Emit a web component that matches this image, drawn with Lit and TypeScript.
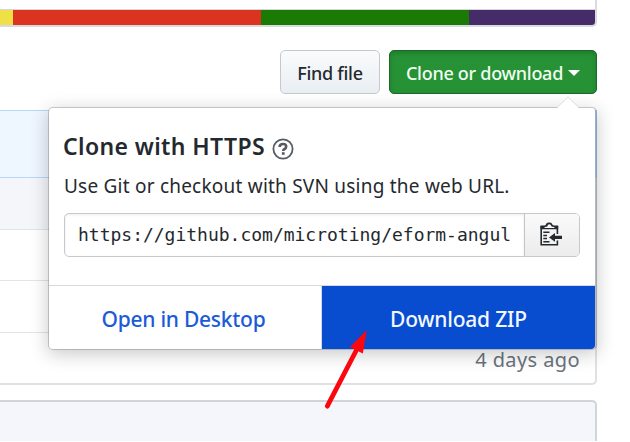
import { LitElement, html, css } from "lit";
import { customElement } from "lit/decorators.js";

const languages = [
  { color: "#f0e048", width: 12.5 },
  { color: "#da3420", width: 248.5 },
  { color: "#1b7a03", width: 208 },
  { color: "#452c68", width: 126 },
];

@customElement("clone-popover")
export class ClonePopover extends LitElement {
  static styles = css`
    :host {
      display: block;
      box-sizing: border-box;
      width: 549px;
      height: 243px;
      border: 1px solid rgba(27, 31, 35, 0.2);
      border-right-width: 2px;
      border-radius: 5px;
      background: #fff;
      background-clip: padding-box;
      box-shadow: 0 4px 18px rgba(27, 31, 35, 0.24);
      color: #24292e;
    }
    .caret {
      position: absolute;
      top: -12px;
      right: 15px;
      width: 24px;
      height: 13px;
      display: block;
    }
    .body {
      box-sizing: border-box;
      height: 177px;
      padding: 21px 15px 0;
    }
    .title {
      display: flex;
      align-items: center;
      height: 34px;
      gap: 7px;
      margin-left: -1px;
      font-size: 23px;
      font-weight: 600;
      white-space: nowrap;
    }
    .title span {
      width: 202px;
      letter-spacing: 0.38px;
    }
    .help {
      width: 22px;
      height: 22px;
      margin-top: 6px;
    }
    .desc {
      height: 28px;
      line-height: 28px;
      margin-top: 9px;
      font-size: 19px;
      letter-spacing: 0.22px;
      white-space: nowrap;
    }
    .group {
      display: flex;
      height: 44px;
      margin-top: 13px;
      box-sizing: border-box;
      border: 1.5px solid #c5c9cf;
      border-radius: 5px;
      overflow: hidden;
    }
    .url {
      flex: 1;
      padding-left: 13px;
      font: 18px/41px "DejaVu Sans Mono", monospace;
      letter-spacing: -0.01px;
      overflow: hidden;
      white-space: nowrap;
      box-shadow: inset 0 1px 3px rgba(27, 31, 35, 0.08);
    }
    .copy {
      width: 54px;
      display: flex;
      align-items: center;
      justify-content: center;
      border-left: 1px solid #c2c4c8;
      background: linear-gradient(#fafafa, #ececec);
    }
    .copy svg {
      margin: -2px 2px 0 0;
    }
    .actions {
      display: flex;
      height: 64px;
      box-sizing: border-box;
      border-top: 1px solid #d5dae1;
      font-size: 21px;
      font-weight: 500;
      line-height: 66px;
      text-align: center;
      white-space: nowrap;
    }
    .open {
      width: 273px;
      box-sizing: border-box;
      padding-right: 3px;
      border-right: 1px solid #d5dae1;
      letter-spacing: -0.26px;
      color: #1b5bd7;
    }
    .zip {
      flex: 1;
      letter-spacing: -0.2px;
      background: #084ccf;
      color: #f2f8ff;
      border-bottom-right-radius: 4px;
    }
  `;

  render() {
    return html`
      <svg class="caret" viewBox="0 0 24 13">
        <path d="M0 13L12 1L24 13Z" fill="#fff" />
        <path d="M0.5 12.2L12 0.8L23.5 12.2" fill="none" stroke="#dcdedf" />
      </svg>
      <div class="body">
        <div class="title">
          <span>Clone with HTTPS</span>
          <svg class="help" viewBox="0 0 22 22">
            <circle cx="11" cy="11" r="9.6" fill="none" stroke="#555c64" stroke-width="1.8" />
            <path d="M7.6 9Q7.8 6 11 6Q14.2 6 14.2 8.6Q14.2 10.2 12.6 11Q11.2 11.7 11.2 13" fill="none" stroke="#555c64" stroke-width="2.6" />
            <rect x="9.9" y="14.2" width="2.7" height="2.6" fill="#555c64" />
          </svg>
        </div>
        <div class="desc">Use Git or checkout with SVN using the web URL.</div>
        <div class="group">
          <div class="url">https://github.com/microting/eform-angul</div>
          <div class="copy">
            <svg width="22" height="24" viewBox="0 0 22 24">
              <path d="M1.2 4V22.8H17.4V18.5M17.4 12V4" fill="none" stroke="#24292e" stroke-width="1.6" />
              <path d="M0.5 7.3V3.6H4.6Q6 3.4 6.2 1.8Q7 0.4 9.2 0.4Q11.5 0.4 12 1.8Q12.4 3.4 14 3.6H18.2V7.3Z" fill="#24292e" />
              <path d="M4.2 6Q4.5 4.8 6.4 4.8Q7.8 4.4 7.8 3Q9.3 1.3 10.8 3Q11 4.5 12.5 4.8Q14.4 4.8 14.8 6Z" fill="#f8f8f8" />
              <path d="M3.3 10.2H9.5M3.3 13.4H7M3.3 16.6H7M3.3 19.8H9.5" stroke="#24292e" stroke-width="1.5" />
              <path d="M9 15.4L15 11V13.8H22V17H15V19.8Z" fill="#24292e" />
            </svg>
          </div>
        </div>
      </div>
      <div class="actions">
        <div class="open">Open in Desktop</div>
        <div class="zip">Download ZIP</div>
      </div>
    `;
  }
}

@customElement("app-root")
export class AppRoot extends LitElement {
  static styles = css`
    :host {
      display: block;
      position: relative;
      width: 630px;
      height: 442px;
      overflow: hidden;
      background: #fff;
      font-family: "Noto Sans", "Open Sans", sans-serif;
      color: #24292e;
    }
    .page {
      width: 597px;
    }
    .summary {
      box-sizing: border-box;
      height: 27px;
      border: solid #d9dadf;
      border-width: 0 2px 2px 0;
      border-bottom-right-radius: 5px;
      display: flex;
      align-items: flex-end;
      overflow: hidden;
    }
    .languages {
      display: flex;
      flex: 1;
      height: 15px;
      border-top: 1px solid #d8d5d5;
    }
    .toolbar {
      display: flex;
      justify-content: flex-end;
      gap: 9px;
      height: 44px;
      margin-top: 23px;
    }
    .btn {
      box-sizing: border-box;
      display: flex;
      align-items: center;
      justify-content: center;
      padding-top: 2px;
      border-radius: 5px;
      font-size: 18px;
      font-weight: 500;
      letter-spacing: -0.28px;
      white-space: nowrap;
    }
    .find {
      width: 100px;
      border: 1.5px solid #c5c9cd;
      background: linear-gradient(#fafbfc, #e9eef3);
    }
    .clone {
      width: 208px;
      gap: 5px;
      border: 1.5px solid #1d692d;
      background: #269235;
      box-shadow: inset 0 2px 4px rgba(10, 60, 20, 0.28);
      color: #f0fff2;
    }
    .files {
      box-sizing: border-box;
      height: 275px;
      margin-top: 16px;
      border: solid #dfe2e5;
      border-width: 0 2px 2px 0;
      border-bottom-right-radius: 5px;
    }
    .commit {
      box-sizing: border-box;
      height: 68px;
      margin-right: -2px;
      border: solid #b9d6fb;
      border-width: 1px 2px 1px 0;
      background: #eef6ff;
    }
    .row {
      box-sizing: border-box;
      height: 51.5px;
      border-bottom: 1px solid #e1e4e9;
    }
    .row.head {
      background: #f4f6f9;
    }
    .row.last {
      border: 0;
      padding-right: 15px;
      text-align: right;
      font-size: 20px;
      letter-spacing: 0.4px;
      line-height: 54px;
      color: #6a737d;
    }
    .readme {
      box-sizing: border-box;
      height: 41px;
      margin-top: 15px;
      border: solid #d1d5da;
      border-width: 2px 2px 0 0;
      border-top-right-radius: 5px;
      background: #f4f6fb;
    }
    clone-popover {
      position: absolute;
      left: 48px;
      top: 107px;
    }
    .pointer {
      position: absolute;
      left: 320px;
      top: 325px;
    }
  `;

  render() {
    return html`
      <div class="page">
        <div class="summary">
          <div class="languages">
            ${languages.map((l) => html`<div style="width:${l.width}px;background:${l.color}"></div>`)}
          </div>
        </div>
        <div class="toolbar">
          <div class="btn find"><span>Find file</span></div>
          <div class="btn clone">
            <span>Clone or download</span>
            <svg width="12" height="6" viewBox="0 0 12 6"><path d="M0 0H12L6 6Z" fill="#fff" /></svg>
          </div>
        </div>
        <div class="files">
          <div class="commit"></div>
          <div class="row head"></div>
          <div class="row"></div>
          <div class="row"></div>
          <div class="row last"><span>4 days ago</span></div>
        </div>
        <div class="readme"></div>
      </div>
      <clone-popover></clone-popover>
      <svg class="pointer" width="54" height="88" viewBox="0 0 54 88">
        <path d="M7.3 81.2L37 24" stroke="#fb0710" stroke-width="4.8" stroke-linecap="round" />
        <path d="M46.8 5L30 22L42.8 28.4Z" fill="#fb0710" />
      </svg>
    `;
  }
}
